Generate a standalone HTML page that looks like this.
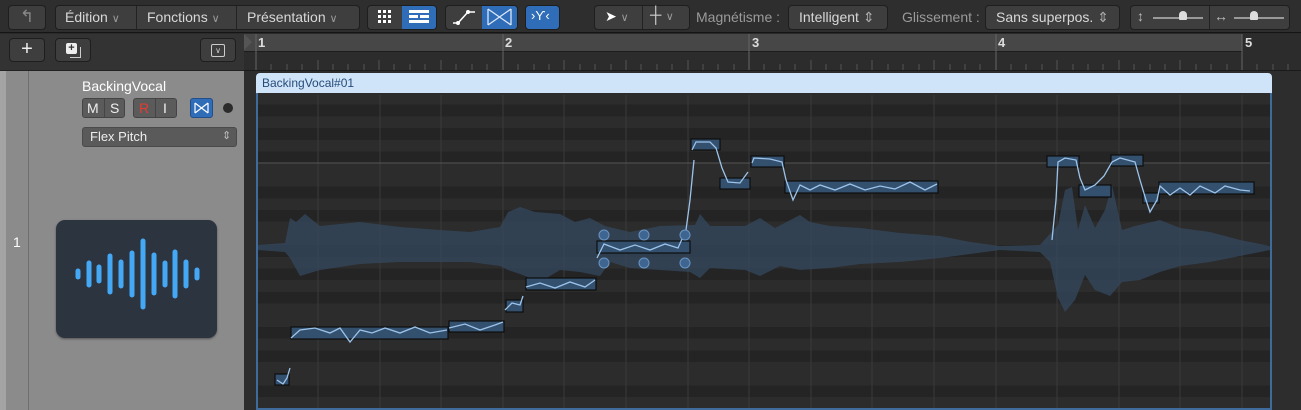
<!DOCTYPE html>
<html><head><meta charset="utf-8"><style>
*{margin:0;padding:0;box-sizing:border-box}
body{width:1301px;height:410px;overflow:hidden;background:#2a2a2a;font-family:"Liberation Sans",sans-serif;position:relative;color:#ddd}
.a{position:absolute}
.btn{position:absolute;background:#3e3e3e;border:1px solid #1e1e1e;border-radius:4px}
.t{position:absolute;font-size:14px;color:#d8d8d8;white-space:nowrap}
.blue{background:#2f6db8}
</style></head><body>
<div class="a" style="left:0;top:0;width:1301px;height:33px;background:#2e2e2e;border-bottom:1px solid #151515"></div>
<div class="btn" style="left:8px;top:5px;width:38px;height:25px;color:#888;font-size:17px;text-align:center;line-height:22px">↰</div>
<div class="btn" style="left:55px;top:5px;width:305px;height:25px"></div>
<div class="a" style="left:136px;top:6px;width:1px;height:23px;background:#222"></div>
<div class="a" style="left:236px;top:6px;width:1px;height:23px;background:#222"></div>
<div class="t" style="left:65px;top:9px">Édition <span style="color:#999;font-size:11px">∨</span></div>
<div class="t" style="left:147px;top:9px">Fonctions <span style="color:#999;font-size:11px">∨</span></div>
<div class="t" style="left:247px;top:9px">Présentation <span style="color:#999;font-size:11px">∨</span></div>
<div class="btn" style="left:367px;top:5px;width:70px;height:25px"></div>
<div class="a blue" style="left:402px;top:6px;width:34px;height:23px;border-radius:0 3px 3px 0"></div>
<svg class="a" style="left:378px;top:10px" width="14" height="14"><g fill="#fff"><rect x="0" y="0" width="3" height="3"/><rect x="5" y="0" width="3" height="3"/><rect x="10" y="0" width="3" height="3"/><rect x="0" y="5" width="3" height="3"/><rect x="5" y="5" width="3" height="3"/><rect x="10" y="5" width="3" height="3"/><rect x="0" y="10" width="3" height="3"/><rect x="5" y="10" width="3" height="3"/><rect x="10" y="10" width="3" height="3"/></g></svg>
<svg class="a" style="left:409px;top:10px" width="20" height="14"><g fill="#fff"><rect x="0" y="0" width="20" height="3"/><rect x="0" y="5" width="9" height="3"/><rect x="11" y="5" width="9" height="3"/><rect x="0" y="10" width="20" height="3"/></g></svg>
<div class="btn" style="left:445px;top:5px;width:73px;height:25px"></div>
<div class="a blue" style="left:482px;top:6px;width:35px;height:23px;border-radius:0 3px 3px 0"></div>
<svg class="a" style="left:452px;top:9px" width="24" height="16"><path d="M1 14H6L16 3H23" stroke="#fff" stroke-width="1.5" fill="none"/><circle cx="6" cy="14" r="2" fill="#fff"/><circle cx="16" cy="3" r="2" fill="#fff"/></svg>
<svg class="a" style="left:487px;top:8px" width="25" height="18"><path d="M1 1V17M24 1V17M1 1L24 17M1 17L24 1" stroke="#dbe8f7" stroke-width="1.3" fill="none"/></svg>
<div class="btn blue" style="left:525px;top:5px;width:35px;height:25px"></div>
<div class="t" style="left:531px;top:8px;color:#fff;font-size:13px">›Ƴ‹</div>
<div class="btn" style="left:594px;top:5px;width:96px;height:25px"></div>
<div class="a" style="left:642px;top:6px;width:1px;height:23px;background:#222"></div>
<div class="t" style="left:605px;top:8px;color:#fff">➤ <span style="color:#999;font-size:11px">∨</span></div>
<div class="t" style="left:650px;top:7px;color:#ccc;font-size:16px">┼ <span style="color:#999;font-size:11px">∨</span></div>
<div class="t" style="left:696px;top:9px;color:#9a9a9a">Magnétisme :</div>
<div class="btn" style="left:788px;top:5px;width:100px;height:25px"></div>
<div class="t" style="left:799px;top:9px">Intelligent <span style="color:#aaa">⇕</span></div>
<div class="t" style="left:902px;top:9px;color:#9a9a9a">Glissement :</div>
<div class="btn" style="left:985px;top:5px;width:135px;height:25px"></div>
<div class="t" style="left:996px;top:9px">Sans superpos. <span style="color:#aaa">⇕</span></div>
<div class="btn" style="left:1130px;top:5px;width:160px;height:25px"></div>
<div class="a" style="left:1209px;top:6px;width:1px;height:23px;background:#222"></div>
<div class="t" style="left:1137px;top:8px;color:#bbb">↕</div>
<div class="a" style="left:1153px;top:17px;width:50px;height:2px;background:#999"></div>
<div class="a" style="left:1179px;top:11px;width:8px;height:9px;background:#ddd;border-radius:4px 4px 1px 1px"></div>
<div class="t" style="left:1214px;top:8px;color:#bbb">↔</div>
<div class="a" style="left:1234px;top:17px;width:50px;height:2px;background:#999"></div>
<div class="a" style="left:1250px;top:11px;width:8px;height:9px;background:#ddd;border-radius:4px 4px 1px 1px"></div>
<div class="a" style="left:0;top:34px;width:244px;height:36px;background:#333"></div>
<div class="btn" style="left:9px;top:38px;width:36px;height:24px;color:#eee;font-size:20px;text-align:center;line-height:21px">+</div>
<div class="btn" style="left:55px;top:38px;width:36px;height:24px"></div>
<div class="a" style="left:66px;top:43px;width:11px;height:11px;background:#eee;border-radius:2px;color:#333;font-size:11px;line-height:11px;text-align:center;font-weight:bold">+</div>
<div class="a" style="left:70px;top:47px;width:11px;height:11px;border-right:1.5px solid #ccc;border-bottom:1.5px solid #ccc"></div>
<div class="btn" style="left:200px;top:38px;width:36px;height:24px"></div>
<div class="a" style="left:211px;top:44px;width:14px;height:13px;border:1.5px solid #ccc;border-radius:2px;color:#ccc;font-size:8px;text-align:center;line-height:12px">∨</div>
<div class="a" style="left:244px;top:34px;width:1057px;height:18px;background:#474747;border-bottom:1px solid #1c1c1c"></div>
<div class="a" style="left:1242px;top:34px;width:59px;height:18px;background:#2c2c2c"></div>
<div class="a" style="left:244px;top:52px;width:1057px;height:18px;background:#2c2c2c"></div>
<svg class="a" style="left:244px;top:34px" width="1057" height="36">
<path d="M0 0L8 8L0 16Z" fill="#555"/>
<g stroke="#666" stroke-width="1"><path d="M12 0V36M259 0V36M505 0V36M752 0V36M998 0V36"/></g>
<g stroke="#555">
<path d="M27 30V36M43 30V36M58 30V36M74 26V36M89 30V36M104 30V36M120 30V36M135 26V36M150 30V36M166 30V36M181 30V36M197 26V36M212 30V36M228 30V36M243 30V36
M274 30V36M290 30V36M305 30V36M320 26V36M336 30V36M351 30V36M367 30V36M382 26V36M397 30V36M413 30V36M428 30V36M444 26V36M459 30V36M474 30V36M490 30V36
M520 30V36M536 30V36M551 30V36M567 26V36M582 30V36M597 30V36M613 30V36M628 26V36M644 30V36M659 30V36M675 30V36M690 26V36M706 30V36M721 30V36M736 30V36
M767 30V36M782 30V36M798 30V36M813 26V36M829 30V36M844 30V36M859 30V36M875 26V36M890 30V36M906 30V36M921 30V36M936 26V36M952 30V36M967 30V36M983 30V36
M1013 30V36M1029 30V36M1044 30V36"/></g>
<g fill="#ddd" font-size="13" font-weight="bold" font-family="Liberation Sans"><text x="14" y="13">1</text><text x="261" y="13">2</text><text x="508" y="13">3</text><text x="754" y="13">4</text><text x="1001" y="13">5</text></g>
</svg>
<div class="a" style="left:0;top:70px;width:244px;height:340px;background:#8b8b8b;border-top:1px solid #222"></div>
<div class="a" style="left:0;top:71px;width:6px;height:339px;background:#a4a4a4"></div>
<div class="a" style="left:28px;top:71px;width:1px;height:339px;background:#6e6e6e"></div>
<div class="t" style="left:13px;top:234px;color:#fff;font-size:14px">1</div>
<div class="t" style="left:82px;top:78px;color:#fff;font-size:14px">BackingVocal</div>
<div class="a" style="left:82px;top:98px;width:43px;height:20px;background:#5b5b5b;border:1px solid #444;border-radius:3px"></div>
<div class="a" style="left:104px;top:99px;width:1px;height:18px;background:#444"></div>
<div class="t" style="left:87px;top:100px;color:#eee">M</div><div class="t" style="left:110px;top:100px;color:#eee">S</div>
<div class="a" style="left:133px;top:98px;width:44px;height:20px;background:#5b5b5b;border:1px solid #444;border-radius:3px"></div>
<div class="a" style="left:155px;top:99px;width:1px;height:18px;background:#444"></div>
<div class="t" style="left:139px;top:100px;color:#e53b30">R</div><div class="t" style="left:163px;top:100px;color:#eee">I</div>
<div class="a" style="left:190px;top:98px;width:23px;height:20px;background:#2f6db8;border:1px solid #224f88;border-radius:3px"></div>
<svg class="a" style="left:194px;top:102px" width="15" height="12"><path d="M1 1V11M14 1V11M1 1L14 11M1 11L14 1" stroke="#fff" stroke-width="1.2" fill="none"/></svg>
<div class="a" style="left:223px;top:103px;width:10px;height:10px;background:#2b2b2b;border-radius:50%"></div>
<div class="a" style="left:82px;top:127px;width:155px;height:20px;background:#5a5a5a;border:1px solid #4a4a4a;border-radius:3px"></div>
<div class="t" style="left:90px;top:129px;color:#eee;font-size:13px">Flex Pitch</div>
<div class="t" style="left:222px;top:129px;color:#bbb;font-size:11px">⇕</div>
<div class="a" style="left:56px;top:220px;width:161px;height:118px;background:#2c3440;border-radius:9px;box-shadow:0 1px 2px rgba(0,0,0,.4)"></div>
<svg class="a" style="left:56px;top:220px" width="161" height="118"><g stroke="#45a8f5" stroke-width="5" stroke-linecap="round">
<path d="M22 51V57M33 43V65M43 47V61M54 36V72M65 42V66M76 33V75M87 21V87M98 35V73M109 43V65M119 32V76M130 42V66M141 50V58"/></g></svg>
<div class="a" style="left:244px;top:70px;width:1057px;height:340px;background:#2d2d2d;border-top:1px solid #1a1a1a"></div>
<div class="a" style="left:256px;top:93px;width:1016px;height:317px;background:repeating-linear-gradient(to bottom,#2c2c2c 0 11.7px,#242424 11.7px 23.4px,#2c2c2c 23.4px 35.1px,#242424 35.1px 46.8px,#2c2c2c 46.8px 58.5px,#242424 58.5px 70.2px,#2c2c2c 70.2px 93.6px,#242424 93.6px 105.3px,#2c2c2c 105.3px 117px,#242424 117px 128.7px,#2c2c2c 128.7px 140.4px);border-left:2px solid #3e6a9c;border-right:2px solid #3e6a9c;border-bottom:2px solid #3e6a9c"></div>
<div class="a" style="left:256px;top:73px;width:1016px;height:20px;background:#cfe4f8;border-radius:4px 4px 0 0"></div>
<div class="t" style="left:262px;top:76px;color:#274c78;font-size:12px">BackingVocal#01</div>
<svg class="a" style="left:0;top:0" width="1301" height="410">
<g stroke="#3a3a3a" stroke-width="1">
<path d="M318 95V408M380 95V408M441 95V408M503 95V408M564 95V408M626 95V408M688 95V408M749 95V408M811 95V408M872 95V408M934 95V408M996 95V408M1057 95V408M1119 95V408M1180 95V408M1242 95V408"/>
</g>
<path d="M258 163H1270" stroke="#555" stroke-width="1"/>
<path fill="#34485e" fill-opacity="0.75" d="M258 245L285 243L290 218L296 222L305 214L320 226L360 222L400 227L440 230L470 232L500 227L508 212L520 207L535 212L560 214L575 222L590 218L605 226L630 232L660 226L695 225L700 214L710 226L745 226L760 218L775 228L800 215L810 222L830 226L860 228L900 233L940 236L970 242L1000 246L1040 245L1048 236L1058 225L1065 190L1072 187L1078 230L1085 205L1095 228L1105 210L1112 185L1122 230L1135 226L1160 220L1180 228L1210 232L1240 240L1270 246L1270 250L1240 256L1210 262L1180 266L1160 272L1140 280L1122 282L1110 296L1095 290L1085 275L1075 300L1065 312L1058 298L1050 262L1040 252L1000 250L970 254L940 258L900 262L860 264L830 268L800 270L780 266L760 276L745 270L710 268L700 278L690 272L660 270L630 268L610 262L600 276L580 272L560 270L540 282L520 274L508 270L500 266L470 262L440 262L400 262L360 264L320 270L300 276L290 258L285 252L258 250Z"/>
<g fill="#34506f" stroke="#0d0d0d" stroke-width="1.2">
<rect x="275" y="374" width="14" height="11"/><rect x="291" y="327" width="157" height="12"/><rect x="449" y="321" width="55" height="11"/>
<rect x="506" y="300" width="17" height="12"/><rect x="526" y="278" width="70" height="12"/><rect x="597" y="241" width="93" height="12"/>
<rect x="691" y="139" width="29" height="11"/><rect x="720" y="178" width="30" height="11"/><rect x="751" y="156" width="33" height="11"/>
<rect x="785" y="181" width="153" height="12"/><rect x="1047" y="156" width="32" height="11"/><rect x="1079" y="185" width="32" height="12"/>
<rect x="1111" y="155" width="32" height="11"/><rect x="1143" y="193" width="16" height="10"/><rect x="1159" y="182" width="95" height="12"/>
</g>
<g fill="none" stroke="#9cc3ea" stroke-width="1.3">
<path d="M277 380L283 384L287 378L290 368"/>
<path d="M291 338L300 330L315 328L330 333L340 328L350 342L360 330L372 333L385 328L400 333L415 327L430 333L447 330"/>
<path d="M449 328L465 324L480 330L495 325L503 322"/>
<path d="M505 310L512 303L520 305L523 296"/>
<path d="M526 287L540 283L555 288L570 282L585 287L595 280"/>
<path d="M597 258L604 244L620 250L635 245L650 250L665 244L678 248L686 230L690 200L694 160"/>
<path d="M692 150L696 142L710 142L716 148L722 168L728 182L740 183L748 172"/>
<path d="M752 163L754 158L770 159L782 162L786 180L793 200L800 185L810 190L820 185L835 190L850 184L865 190L880 186L895 189L910 182L925 190L937 184"/>
<path d="M1052 240L1056 200L1058 162L1065 158L1076 160L1080 178L1085 190L1095 185L1104 176L1112 162L1120 158L1135 162L1140 180L1146 200L1150 212L1157 200L1160 186L1170 195L1180 188L1190 195L1200 186L1215 193L1225 186L1240 190L1250 191"/>
</g>
<g fill="#3d6590" stroke="#6b95c4" stroke-width="1"><circle cx="604" cy="235" r="5"/><circle cx="644" cy="235" r="5"/><circle cx="685" cy="235" r="5"/><circle cx="604" cy="263" r="5"/><circle cx="644" cy="263" r="5"/><circle cx="685" cy="263" r="5"/></g>
</svg>
</body></html>
